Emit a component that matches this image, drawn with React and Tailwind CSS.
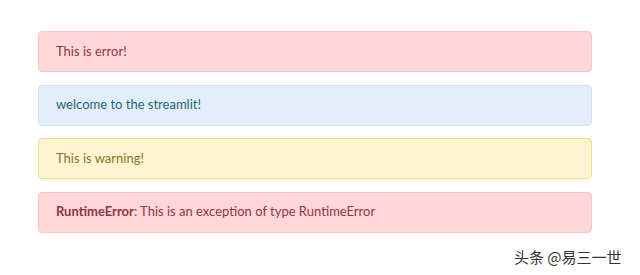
export default function App() {
  const font = { fontFamily: 'Lato, "Noto Sans CJK SC", sans-serif' };
  return (
    <div className="relative w-[640px] h-[275px] bg-white" style={font}>
      <div className="flex flex-col gap-[12.5px] pt-[31px] pl-[38px] w-[592px]">
        <div className="h-[41px] flex items-center px-[17px] rounded-[4px] border border-[#f9c6c7] bg-[#ffd7d8] text-[#933540] text-[13px]">
          This is error!
        </div>
        <div className="h-[41px] flex items-center px-[17px] rounded-[4px] border border-[#d3e3f5] bg-[#e3eefa] text-[#1f6679] text-[13px]">
          welcome to the streamlit!
        </div>
        <div className="h-[41px] flex items-center px-[17px] rounded-[4px] border border-[#f6dc84] bg-[#fff4d1] text-[#8a7226] text-[13px]">
          This is warning!
        </div>
        <div className="h-[41px] flex items-center px-[17px] rounded-[4px] border border-[#f9c6c7] bg-[#ffd7d8] text-[#933540] text-[13px]">
          <span className="font-bold">RuntimeError</span>: This is an exception of type RuntimeError
        </div>
      </div>
      <div className="absolute left-[514px] top-[247px] text-[15px] text-[#333] leading-[20px]" style={{ fontFamily: '"Noto Sans CJK SC", sans-serif' }}>
        头条 @易三一世
      </div>
    </div>
  );
}
